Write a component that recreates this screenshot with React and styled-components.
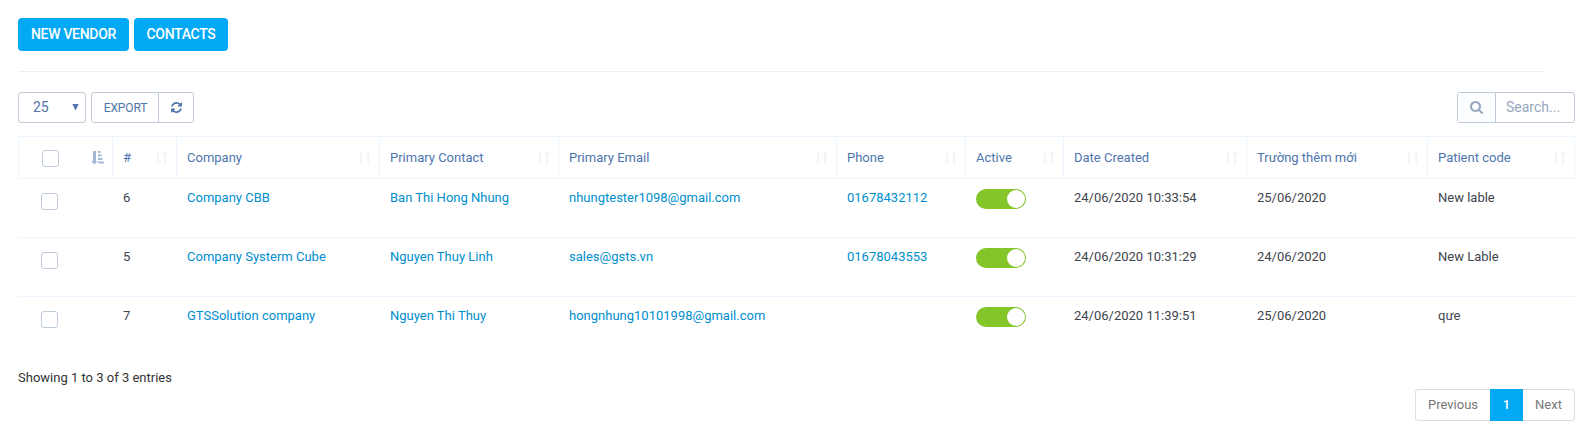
import React from 'react';
import styled, { createGlobalStyle } from 'styled-components';

const Global = createGlobalStyle`
  * { box-sizing: border-box; }
  body { margin: 0; background: #fff; color: #333; font: 13px/18px Roboto, "Noto Sans", sans-serif; }
  button, input { font: inherit; letter-spacing: inherit; margin: 0; }
`;

const Page = styled.main`padding: 18px 20px 0 18px; height: 442px; overflow: hidden;`;

const Actions = styled.div`
  display: flex; gap: 5px; width: 1527px; height: 54px; border-bottom: 1px solid #eceef0;
`;
const ActionButton = styled.button`
  width: ${(p) => p.$w}px; height: 33px; padding: 0 0 2px; border: 0; border-radius: 4px;
  background: #03a9f4; color: #fff; font-size: 14px; font-weight: 500; letter-spacing: -0.3px;
`;

const Toolbar = styled.div`display: flex; align-items: center; height: 31px; margin-top: 20px;`;
const boxed = `height: 31px; border: 1px solid #bfcbd9; border-radius: 3px; background: #fff; color: #4f75ab;`;
const PageLength = styled.button`
  ${boxed} display: flex; align-items: center; justify-content: space-between;
  width: 68px; padding: 0 6px 1px 14px; font-size: 14px;
`;
const ButtonGroup = styled.div`${boxed} display: flex; width: 103px; margin-left: 5px;`;
const GroupButton = styled.button`
  display: flex; align-items: center; justify-content: center; width: ${(p) => p.$w}px; padding: 0 0 0 1px;
  border: 0; border-left: ${(p) => (p.$divided ? '1px solid #bfcbd9' : '0')};
  background: none; color: inherit; font-size: 12px; letter-spacing: -0.1px;
`;
const Search = styled.label`${boxed} display: flex; width: 118px; margin-left: auto; overflow: hidden;`;
const SearchIcon = styled.span`
  display: flex; align-items: center; justify-content: center; width: 38px;
  border-right: 1px solid #bfcbd9; background: #fbfdff; color: #97a8be;
`;
const SearchInput = styled.input`
  width: 78px; padding: 0 0 2px 10px; border: 0; outline: 0; background: none; font-size: 14px;
  &::placeholder { color: #97a8be; opacity: 1; }
`;

const Table = styled.table`
  width: 1557px; margin-top: 13px; border-collapse: separate; border-spacing: 0; table-layout: fixed;
`;
const HeadCell = styled.th`
  width: ${(p) => p.$w}px; height: 43px; padding: 0 8px 0 ${(p) => (p.$first ? 23 : 10)}px;
  border: solid #ebf5ff; border-width: 1px 1px 1px ${(p) => (p.$first ? 1 : 0)}px;
  color: #4e75ad; font-weight: 400; text-align: left; vertical-align: middle; white-space: nowrap;
`;
const HeadContent = styled.div`display: flex; align-items: center; justify-content: space-between;`;
const Cell = styled.td`
  height: ${(p) => (p.$last ? 58 : 59)}px; padding: ${(p) => (p.$pad ?? 10)}px 0 0 ${(p) => (p.$first ? 23 : 10)}px;
  border-bottom: ${(p) => (p.$last ? '0' : '1px solid #ebf5ff')};
  color: #3e454d; vertical-align: top; white-space: nowrap;
`;
const Link = styled.a`color: #008ece; text-decoration: none;`;
const CheckBox = styled.span`
  display: block; width: 17px; height: 17px; border: 1px solid #bfcbd9; border-radius: 3px; background: #fff;
`;
const HeadCheck = styled(CheckBox)`margin-top: 2px;`;
const Toggle = styled.span`
  display: flex; justify-content: flex-end; width: 50px; height: 20px; padding: 1px; border-radius: 10px; background: #84c529;
`;
const Knob = styled.span`width: 18px; height: 18px; border-radius: 50%; background: #fff;`;

const Info = styled.div`margin-top: 13px; height: 20px; line-height: 20px; color: #333;`;
const Pager = styled.nav`display: flex; width: 160px; margin: 1px 0 0 auto;`;
const PagerItem = styled.button`
  width: ${(p) => p.$w}px; height: 32px; padding: 0; text-align: center;
  border: 1px solid ${(p) => (p.$active ? '#03a9f4' : '#ddd')};
  border-left-width: ${(p) => (p.$side === 'right' ? 0 : 1)}px;
  border-right-width: ${(p) => (p.$side === 'left' ? 0 : 1)}px;
  border-radius: ${(p) => (p.$side === 'left' ? '4px 0 0 4px' : p.$side === 'right' ? '0 4px 4px 0' : '0')};
  background: ${(p) => (p.$active ? '#03a9f4' : '#fff')}; color: ${(p) => (p.$active ? '#fff' : '#777')};
  font-weight: ${(p) => (p.$active ? 500 : 400)};
`;

const SortIcon = () => (
  <svg width="13" height="14" viewBox="0 0 13 14" fill="#f4f5f9">
    <path d="M2 0h2v10h2L3 13.5 0 10h2zM9 13.5h2v-10h2L10 0 7 3.5h2z" />
  </svg>
);
const SortedIcon = () => (
  <svg width="13" height="14" viewBox="0 0 13 14" fill="#a3b8d5">
    <path d="M2 0h3v10h1.500L3.500 13.500 0 10h2zM7 0h2.500v2H7zM7 3.500h3.500v2H7zM7 7h4.500v2H7zM7 10.500h6v2H7z" />
  </svg>
);
const RefreshIcon = () => (
  <svg width="11" height="11" viewBox="0 0 1536 1536" fill="currentColor">
    <path d="M1511 928q0 5-1 7-64 268-268 434.500T764 1536q-146 0-282.500-55T238 1324l-129 129q-19 19-45 19t-45-19-19-45V960q0-26 19-45t45-19h448q26 0 45 19t19 45-19 45l-137 137q71 66 161 102t187 36q134 0 250-65t186-179q11-17 53-117 8-23 30-23h192q13 0 22.500 9.500t9.500 22.500zm25-800v448q0 26-19 45t-45 19h-448q-26 0-45-19t-19-45 19-45l138-138Q969 256 768 256q-134 0-250 65T332 500q-11 17-53 117-8 23-30 23H50q-13 0-22.500-9.500T18 608v-7q65-268 270-434.500T768 0q146 0 284 55.500T1297 212l130-129q19-19 45-19t45 19 19 45z" />
  </svg>
);
const MagnifierIcon = () => (
  <svg width="13" height="13" viewBox="0 0 1664 1664" fill="currentColor">
    <path d="M1152 704q0-185-131.500-316.500T704 256 387.500 387.500 256 704t131.500 316.500T704 1152t316.500-131.500T1152 704zm512 832q0 52-38 90t-90 38q-54 0-90-38l-343-342q-179 124-399 124-143 0-273.500-55.500t-225-150-150-225T0 704t55.500-273.500 150-225 225-150T704 0t273.500 55.500 225 150 150 225T1408 704q0 220-124 399l343 343q37 37 37 90z" />
  </svg>
);
const Caret = () => (
  <svg width="7" height="7" viewBox="0 0 7 7" fill="currentColor"><path d="M0.300 0h6.400L3.500 6.500z" /></svg>
);

const columns = [
  ['#', 64], ['Company', 203], ['Primary Contact', 179], ['Primary Email', 278], ['Phone', 129],
  ['Active', 98], ['Date Created', 183], ['Trường thêm mới', 181], ['Patient code', 147],
];
const vendors = [
  { id: 6, company: 'Company CBB', contact: 'Ban Thi Hong Nhung', email: 'nhungtester1098@gmail.com', phone: '01678432112', created: '24/06/2020 10:33:54', custom: '25/06/2020', code: 'New lable' },
  { id: 5, company: 'Company Systerm Cube', contact: 'Nguyen Thuy Linh', email: 'sales@gsts.vn', phone: '01678043553', created: '24/06/2020 10:31:29', custom: '24/06/2020', code: 'New Lable' },
  { id: 7, company: 'GTSSolution company', contact: 'Nguyen Thi Thuy', email: 'hongnhung10101998@gmail.com', phone: '', created: '24/06/2020 11:39:51', custom: '25/06/2020', code: 'qưe' },
];

export default function App() {
  return (
    <Page>
      <Global />
      <Actions>
        <ActionButton $w={111}>NEW VENDOR</ActionButton>
        <ActionButton $w={94}>CONTACTS</ActionButton>
      </Actions>
      <Toolbar>
        <PageLength>25<Caret /></PageLength>
        <ButtonGroup>
          <GroupButton $w={66}>EXPORT</GroupButton>
          <GroupButton $w={35} $divided><RefreshIcon /></GroupButton>
        </ButtonGroup>
        <Search>
          <SearchIcon><MagnifierIcon /></SearchIcon>
          <SearchInput placeholder="Search..." />
        </Search>
      </Toolbar>
      <Table>
        <thead>
          <tr>
            <HeadCell $w={95} $first><HeadContent><HeadCheck /><SortedIcon /></HeadContent></HeadCell>
            {columns.map(([name, w]) => (
              <HeadCell key={name} $w={w}><HeadContent>{name}<SortIcon /></HeadContent></HeadCell>
            ))}
          </tr>
        </thead>
        <tbody>
          {vendors.map((v, i) => {
            const last = i === vendors.length - 1;
            return (
              <tr key={v.id}>
                <Cell $last={last} $first $pad={14}><CheckBox /></Cell>
                <Cell $last={last}>{v.id}</Cell>
                <Cell $last={last}><Link>{v.company}</Link></Cell>
                <Cell $last={last}><Link>{v.contact}</Link></Cell>
                <Cell $last={last}><Link>{v.email}</Link></Cell>
                <Cell $last={last}><Link>{v.phone}</Link></Cell>
                <Cell $last={last}><Toggle><Knob /></Toggle></Cell>
                <Cell $last={last}>{v.created}</Cell>
                <Cell $last={last}>{v.custom}</Cell>
                <Cell $last={last}>{v.code}</Cell>
              </tr>
            );
          })}
        </tbody>
      </Table>
      <Info>Showing 1 to 3 of 3 entries</Info>
      <Pager>
        <PagerItem $w={75} $side="left">Previous</PagerItem>
        <PagerItem $w={33} $active>1</PagerItem>
        <PagerItem $w={52} $side="right">Next</PagerItem>
      </Pager>
    </Page>
  );
}
